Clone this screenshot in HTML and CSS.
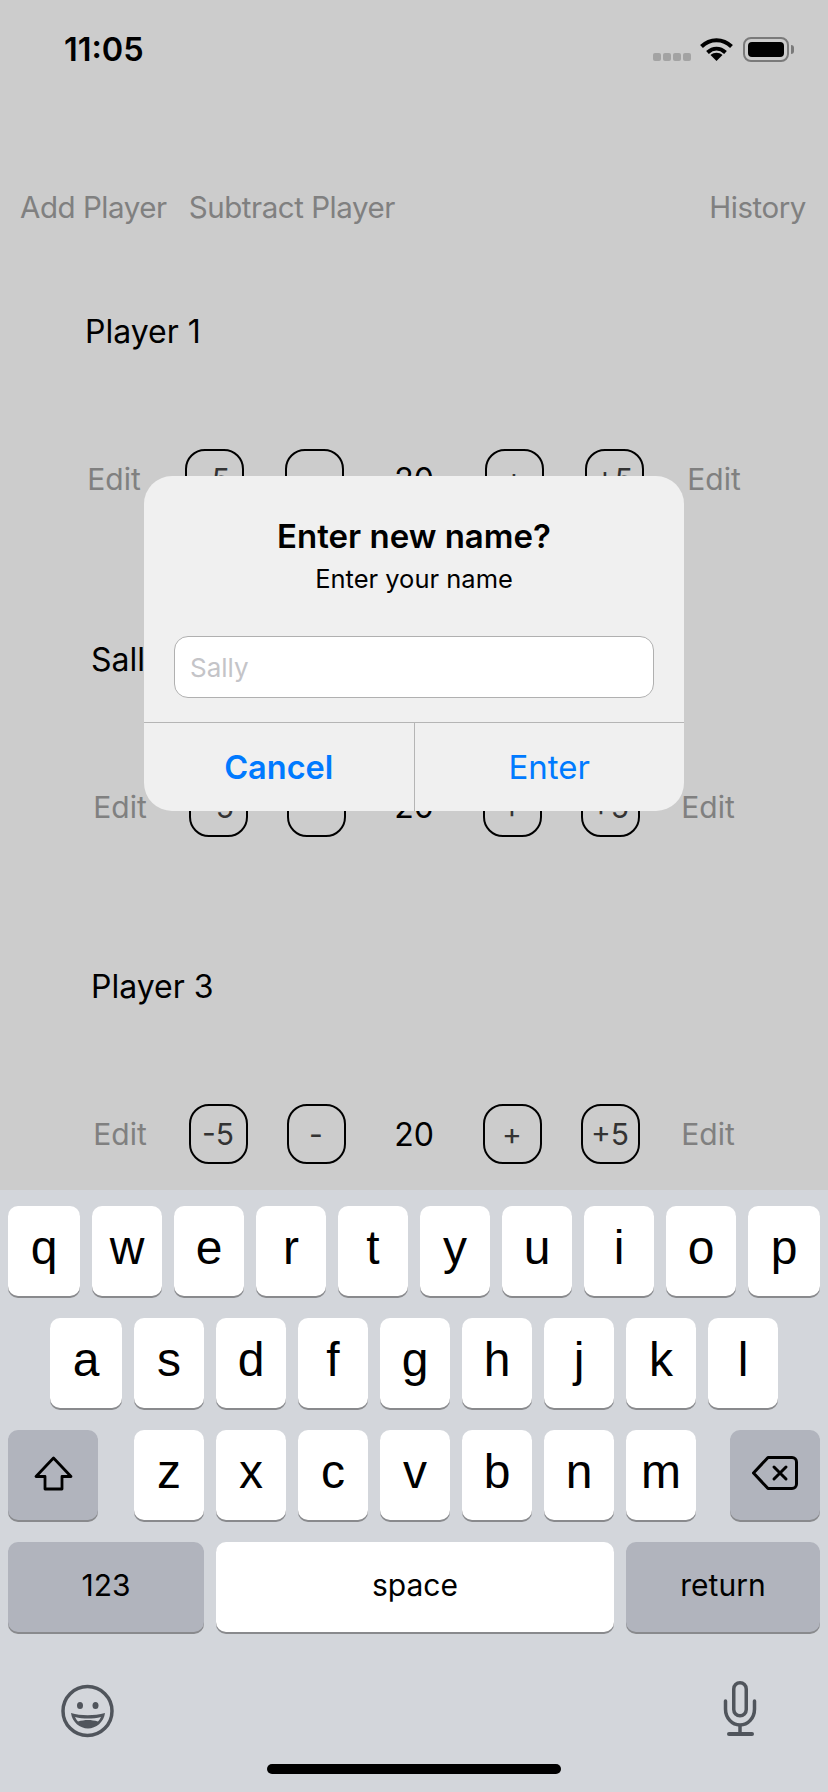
FILE: index.html
```html
<!DOCTYPE html>
<html lang="en">
<head>
    <meta charset="UTF-8">
    <meta name="viewport" content="width=device-width, initial-scale=1.0">
    <title>Life Counter</title>
    <link rel="stylesheet" href="styles.css">
</head>
<body>
    <div class="screen">
        <div class="status">
            <span class="time">11:05</span>
            <div class="status-icons">
                <div class="dots"><i></i><i></i><i></i><i></i></div>
                <svg class="wifi" width="33" height="24" viewBox="0 0 33 24">
                    <path d="M1.5 9.5C10 1 23 1 31.5 9.5" fill="none" stroke="#000" stroke-width="4"/>
                    <path d="M7.5 15.5C13 10.5 20 10.500 25.5 15.5" fill="none" stroke="#000" stroke-width="4"/>
                    <path d="M16.5 24L10.5 18C14 15 19 15 22.5 18Z" fill="#000"/>
                </svg>
                <div class="battery"><div class="battery-fill"></div></div>
                <div class="battery-nub"></div>
            </div>
        </div>

        <div class="toolbar">
            <span>Add Player</span>
            <span>Subtract Player</span>
            <span class="history">History</span>
        </div>

        <div class="player player-first">
            <div class="name">Player 1</div>
            <div class="row">
                <span class="edit">Edit</span>
                <div class="cell"><span class="step">-5</span></div>
                <div class="cell"><span class="step">-</span></div>
                <div class="cell count">20</div>
                <div class="cell"><span class="step">+</span></div>
                <div class="cell"><span class="step">+5</span></div>
                <span class="edit">Edit</span>
            </div>
        </div>

        <div class="player">
            <div class="name">Sally</div>
            <div class="row">
                <span class="edit">Edit</span>
                <div class="cell"><span class="step">-5</span></div>
                <div class="cell"><span class="step">-</span></div>
                <div class="cell count">20</div>
                <div class="cell"><span class="step">+</span></div>
                <div class="cell"><span class="step">+5</span></div>
                <span class="edit">Edit</span>
            </div>
        </div>

        <div class="player">
            <div class="name">Player 3</div>
            <div class="row">
                <span class="edit">Edit</span>
                <div class="cell"><span class="step">-5</span></div>
                <div class="cell"><span class="step">-</span></div>
                <div class="cell count">20</div>
                <div class="cell"><span class="step">+</span></div>
                <div class="cell"><span class="step">+5</span></div>
                <span class="edit">Edit</span>
            </div>
        </div>

        <div class="keyboard">
            <div class="keys">
                <div class="key wide">q</div><div class="key">w</div><div class="key">e</div><div class="key">r</div><div class="key">t</div><div class="key">y</div><div class="key">u</div><div class="key">i</div><div class="key">o</div><div class="key wide">p</div>
            </div>
            <div class="keys keys-home">
                <div class="key wide">a</div><div class="key">s</div><div class="key">d</div><div class="key">f</div><div class="key">g</div><div class="key">h</div><div class="key">j</div><div class="key">k</div><div class="key">l</div>
            </div>
            <div class="keys">
                <div class="key dark shift">
                    <svg width="39" height="35" viewBox="0 0 39 35"><path d="M19.5 2L2 20.500H11V33H28V20.500H37Z" fill="none" stroke="#000" stroke-width="2.800" stroke-linejoin="round"/></svg>
                </div>
                <div class="key">z</div><div class="key">x</div><div class="key">c</div><div class="key">v</div><div class="key">b</div><div class="key">n</div><div class="key">m</div>
                <div class="key dark delete">
                    <svg width="46" height="34" viewBox="0 0 46 34"><path d="M16 1.500H40a4.500 4.500 0 0 1 4.500 4.500V28a4.500 4.500 0 0 1-4.500 4.500H16L1.500 17Z" fill="none" stroke="#000" stroke-width="3" stroke-linejoin="round"/><path d="M22 11L34 23M34 11L22 23" fill="none" stroke="#000" stroke-width="3" stroke-linecap="round"/></svg>
                </div>
            </div>
            <div class="keys">
                <div class="key dark label numbers">123</div>
                <div class="key label space">space</div>
                <div class="key dark label return">return</div>
            </div>
            <div class="kb-bottom">
                <svg class="emoji" width="54" height="54" viewBox="0 0 54 54">
                    <circle cx="26.500" cy="27" r="24.500" fill="none" stroke="#50555c" stroke-width="3.500"/>
                    <ellipse cx="19" cy="21.500" rx="3" ry="3.500" fill="#50555c"/>
                    <ellipse cx="34.500" cy="21.500" rx="3" ry="3.500" fill="#50555c"/>
                    <path d="M10 29C20 32 33 32 44 29C43 38 35 44.500 27 44.500C19 44.500 11 38 10 29Z" fill="#50555c"/>
                    <path d="M14 33C22 35 32 35 40 33C39 35 38 36.500 37 37.500C30 35.500 24 35.500 17 37.500C16 36.500 15 35 14 33Z" fill="#d3d6db"/>
                </svg>
                <svg class="mic" width="38" height="56" viewBox="0 0 38 56">
                    <rect x="12.750" y="1.750" width="12.500" height="33" rx="6.250" fill="none" stroke="#50555c" stroke-width="3.500"/>
                    <path d="M4.500 20V28C4.500 37 11 44 19 44C27 44 33.500 37 33.500 28V20" fill="none" stroke="#50555c" stroke-width="3.500" stroke-linecap="round"/>
                    <path d="M19 44V52" fill="none" stroke="#50555c" stroke-width="3.500"/>
                    <path d="M8 53H31" fill="none" stroke="#50555c" stroke-width="4" stroke-linecap="round"/>
                </svg>
            </div>
            <div class="home-bar"></div>
        </div>

        <div class="dialog">
            <div class="dialog-title">Enter new name?</div>
            <div class="dialog-text">Enter your name</div>
            <div class="dialog-input">Sally</div>
            <div class="dialog-buttons">
                <div class="dialog-btn cancel">Cancel</div>
                <div class="dialog-btn">Enter</div>
            </div>
        </div>
    </div>
</body>
</html>
```

FILE: styles.css
```css
*{
    padding: 0;
    margin: 0;
    box-sizing: border-box;
}

body{
    background-color: #ccc;
    color: #000;
    font-family: Inter, "Liberation Sans", sans-serif;
}

.screen{
    position: relative;
    width: 828px;
    height: 1792px;
    overflow: hidden;
    display: flex;
    flex-direction: column;
}

/* status bar */
.status{
    height: 86px;
    padding: 30px 34px 0 64px;
    display: flex;
    justify-content: space-between;
    align-items: flex-start;
}

.time{
    font-size: 32.5px;
    font-weight: 600;
    line-height: 40px;
}

.status-icons{
    display: flex;
    align-items: flex-start;
    padding-top: 7px;
}

.dots{
    display: flex;
    gap: 2px;
    margin-top: 16px;
    margin-right: 9px;
}

.dots i{
    width: 8px;
    height: 8px;
    border-radius: 2px;
    background-color: #a3a3a3;
}

.wifi{
    margin-right: 10px;
}

.battery{
    width: 46px;
    height: 25px;
    padding: 3px;
    border: 2px solid #7a7a7a;
    border-radius: 8px;
}

.battery-fill{
    height: 100%;
    background-color: #000;
    border-radius: 4px;
}

.battery-nub{
    width: 3px;
    height: 9px;
    margin: 8px 0 0 2px;
    background-color: #7a7a7a;
    border-radius: 0 3px 3px 0;
}

/* top links */
.toolbar{
    margin-top: 100px;
    height: 42px;
    padding: 0 22px 0 20px;
    display: flex;
    gap: 22px;
    align-items: center;
    font-size: 29.5px;
    letter-spacing: -0.45px;
    color: #808080;
}

.history{
    margin-left: auto;
}

/* players */
.player{
    height: 327.5px;
    padding-left: 91px;
}

.player-first{
    margin-top: 83px;
    padding-left: 85px;
}

.name{
    height: 42px;
    line-height: 42px;
    font-size: 32px;
}

.row{
    margin: 96px 0 0 -91px;
    height: 60px;
    display: flex;
    justify-content: center;
    align-items: center;
    font-size: 30px;
}

.player-first .row{
    margin-left: -85px;
}

.edit,
.cell{
    width: 98px;
    display: flex;
    justify-content: center;
    align-items: center;
}

.edit{
    color: #808080;
}

.player-first .edit,
.player-first .cell{
    width: 100px;
}

.step{
    width: 59px;
    height: 60px;
    display: flex;
    justify-content: center;
    align-items: center;
    color: #333;
    border: 2px solid #000;
    border-radius: 20px;
}

.count{
    font-size: 32px;
}

/* keyboard */
.keyboard{
    position: absolute;
    left: 0;
    right: 0;
    bottom: 0;
    height: 602px;
    padding: 16px 8px 0;
    background-color: #d3d6db;
}

.keys{
    display: flex;
    gap: 12px;
    margin-bottom: 22px;
}

.keys-home{
    padding-left: 42px;
}

.key{
    width: 70px;
    height: 90px;
    display: flex;
    justify-content: center;
    align-items: center;
    padding-bottom: 8px;
    background-color: #fff;
    border-radius: 10px;
    box-shadow: 0 2px 0 #898a8d;
    font-family: "Liberation Sans", sans-serif;
    font-size: 48px;
}

.key.wide{
    width: 72px;
}

.key.dark{
    background-color: #b1b4bd;
    padding-bottom: 4px;
}

.key.label{
    padding-bottom: 4px;
    font-family: Inter, "Liberation Sans", sans-serif;
    font-size: 30px;
}

.shift{
    width: 90px;
    margin-right: 24px;
}

.key.delete{
    width: 90px;
    margin-left: 22px;
}

.numbers{
    width: 196px;
}

.space{
    width: 398px;
}

.return{
    width: 194px;
}

.kb-bottom{
    margin-top: 46px;
    height: 60px;
    padding: 0 61px 0 53px;
    display: flex;
    justify-content: space-between;
    align-items: center;
}

.emoji{
    margin-top: 5px;
}

.mic{
    margin-top: 2px;
}

.home-bar{
    width: 294px;
    height: 10px;
    margin: 26px auto 0;
    background-color: #000;
    border-radius: 5px;
}

/* alert */
.dialog{
    position: absolute;
    left: 144px;
    top: 476px;
    width: 540px;
    height: 335px;
    padding-top: 40px;
    text-align: center;
    background-color: #f0f0f0;
    border-radius: 28px;
    overflow: hidden;
}

.dialog-title{
    font-size: 33px;
    font-weight: 600;
    line-height: 40px;
}

.dialog-text{
    margin-top: 7px;
    font-size: 25.5px;
    line-height: 32px;
}

.dialog-input{
    height: 62px;
    margin: 41px 30px 24px;
    padding-left: 15px;
    line-height: 62px;
    text-align: left;
    font-size: 26px;
    color: #c4c4c8;
    background-color: #fff;
    border: 1px solid #b0b0b0;
    border-radius: 14px;
}

.dialog-buttons{
    display: flex;
    height: 89px;
    border-top: 1px solid #b5b5b5;
}

.dialog-btn{
    flex: 1;
    display: flex;
    justify-content: center;
    align-items: center;
    font-size: 33px;
    color: #007aff;
}

.cancel{
    font-size: 32.5px;
    font-weight: 600;
    border-right: 1px solid #b5b5b5;
}
```
